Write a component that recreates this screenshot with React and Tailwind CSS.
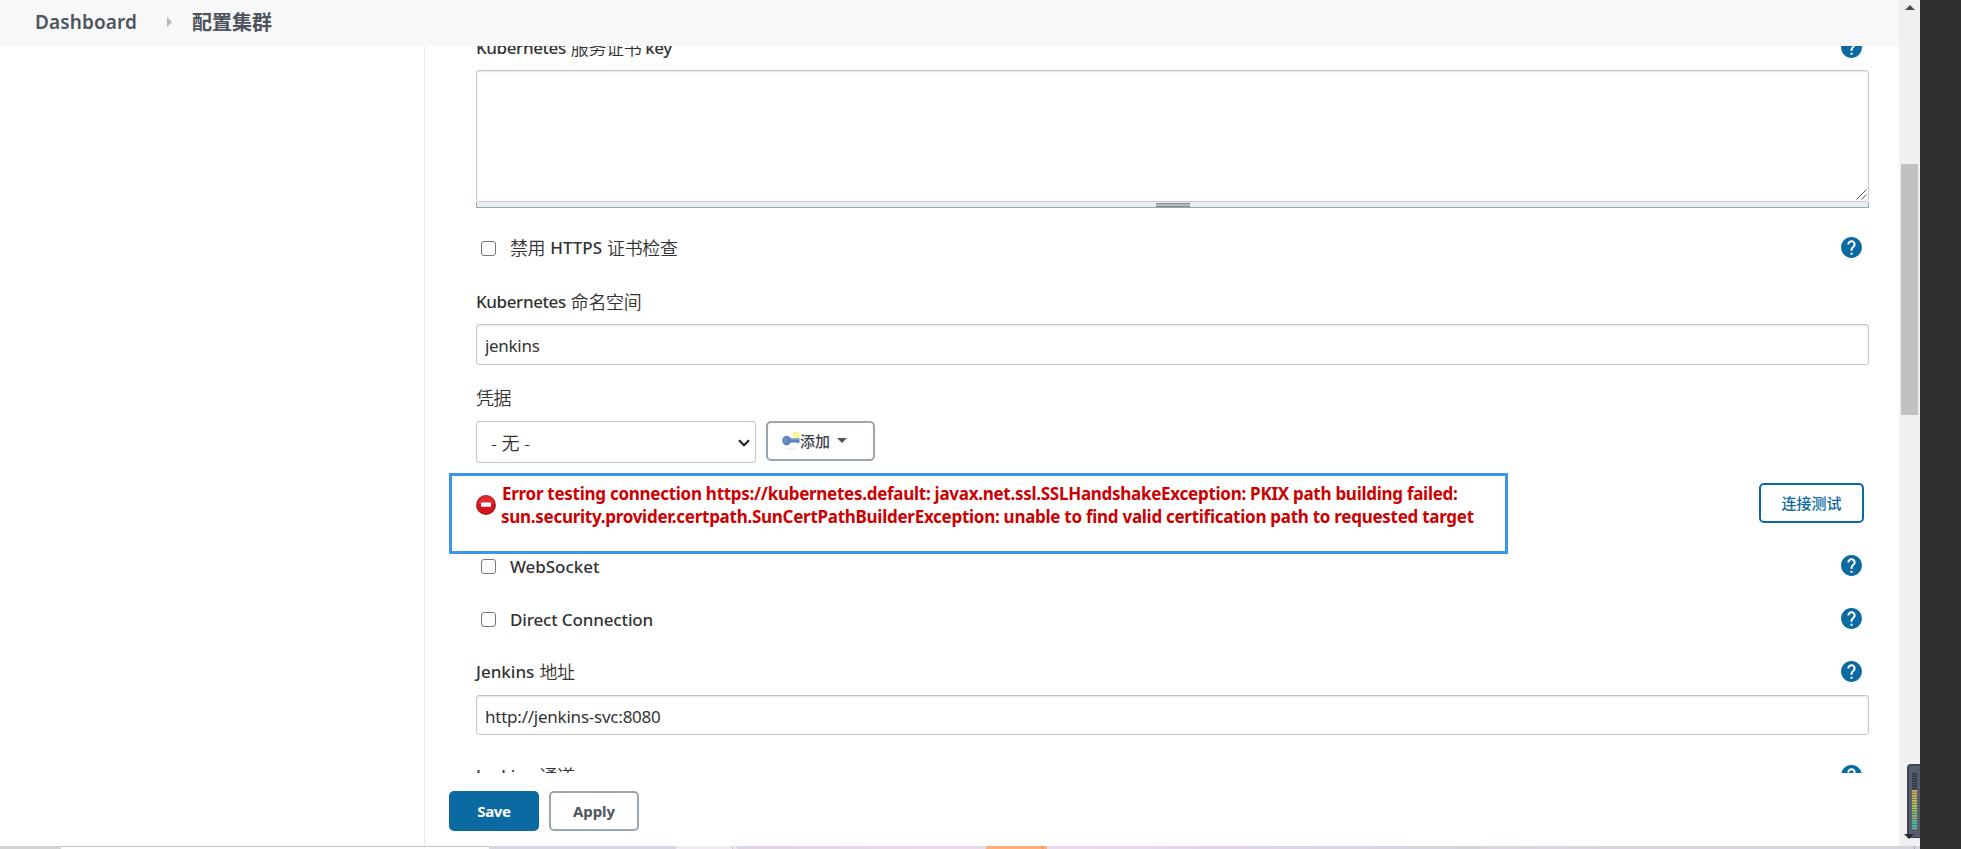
import React from "react";

const HelpIcon = () => (
  <svg viewBox="0 0 24 24" className="w-[25px] h-[25px] -m-[2px] shrink-0">
    <path fill="#0b6aa2" d="M12 2C6.48 2 2 6.48 2 12s4.48 10 10 10 10-4.48 10-10S17.52 2 12 2zm1 17h-2v-2h2v2zm2.07-7.75l-.9.92C13.45 12.9 13 13.5 13 15h-2v-.5c0-1.1.45-2.1 1.17-2.83l1.24-1.26c.37-.36.59-.86.59-1.41 0-1.1-.9-2-2-2s-2 .9-2 2H8c0-2.21 1.79-4 4-4s4 1.79 4 4c0 .88-.36 1.68-.93 2.25z" />
  </svg>
);

const KeyIcon = () => (
  <svg viewBox="0 0 18 20" className="w-[18px] h-5 shrink-0">
    <ellipse cx="9" cy="17.8" rx="6" ry="1.1" fill="#eeeeee" />
    <circle cx="14.2" cy="4.2" r="3.2" fill="#fdf47c" />
    <path d="M6 7.2h11.5v4.2l-1.5 1-1.5-1H6z" fill="#5b86bd" />
    <path d="M8 7.4h9v1.2H8z" fill="#8fb0d8" />
    <ellipse cx="4.6" cy="9.6" rx="4.4" ry="4.8" fill="#5683bc" />
    <ellipse cx="4" cy="9" rx="2.4" ry="2.8" fill="#6a91c6" />
    <circle cx="14.2" cy="4.2" r="1.2" fill="#fffcc8" />
  </svg>
);

const ErrorIcon = () => (
  <svg viewBox="0 0 20 20" className="w-5 h-5 shrink-0">
    <circle cx="10" cy="10" r="9.9" fill="#a81a1e" />
    <circle cx="10" cy="9.6" r="8.8" fill="#d8141b" />
    <path d="M2 9a8 8 0 0 1 16 0z" fill="#e0484c" opacity=".5" />
    <rect x="5" y="7.5" width="10" height="4.3" rx=".6" fill="#fff" />
  </svg>
);

const Checkbox = () => (
  <input type="checkbox" className="appearance-none w-[15px] h-[15px] ml-[5px] mr-[14px] bg-white border border-[#767676] rounded-[3px] shrink-0" />
);

const Row = ({ children, className, help = true }) => (
  <div className={`flex items-center h-6 pr-[7px] whitespace-nowrap text-[17px] font-medium ${className}`}>
    {children}
    {help && (
      <div className="ml-auto -mt-px">
        <HelpIcon />
      </div>
    )}
  </div>
);

const Cjk = ({ children }) => <span className="text-[18px] tracking-[-0.4px] font-[350]">{children}</span>;

const inputStyle = "block w-full border border-[#c6c6c6] rounded-[3px] pl-2 text-[17px] bg-white shadow-[inset_0_1px_2px_rgba(0,0,0,0.1)] outline-none";

const Meter = () => (
  <svg viewBox="0 0 13 74" className="absolute left-[8px] top-[764px] w-[13px] h-[74px]">
    <path d="M13 0H4Q0 0 0 4V70Q0 74 4 74H13z" fill="#3d424c" />
    <path d="M13 2H4Q2 2 2 4V70Q2 73 4 73H13z" fill="#555c6d" />
    <path d="M7.6 9V26" stroke="#30343b" strokeWidth="5" strokeDasharray="1.5 1" />
    <path d="M7.6 26V36" stroke="#d4b84e" strokeWidth="5" strokeDasharray="1.7 .8" />
    <path d="M7.6 36V46" stroke="#c0c950" strokeWidth="5" strokeDasharray="1.7 .8" />
    <path d="M7.6 46V56" stroke="#83c266" strokeWidth="5" strokeDasharray="1.7 .8" />
    <path d="M7.6 56V66" stroke="#4fc5a0" strokeWidth="5" strokeDasharray="1.7 .8" />
  </svg>
);

const App = () => {
  return (
    <div className="flex w-[1961px] h-[849px] overflow-hidden bg-[#303030] text-[#333] font-['Noto_Sans','Noto_Sans_CJK_SC',sans-serif]">
      <div className="flex flex-col w-[1920px]">
        <div className="flex h-[846px]">
          <div className="flex flex-col w-[1899px] bg-white">
            <header className="flex items-center h-[46px] shrink-0 pl-[35px] pb-px bg-[#f8f8f8] text-[#4d545d] font-semibold">
              <span className="text-[19px] tracking-[0.1px]">Dashboard</span>
              <svg viewBox="0 0 5 10" className="w-[5px] h-[10px] ml-[30px] mr-5 mb-[2px]">
                <path d="M0 0L5 5L0 10z" fill="#b5b8bb" />
              </svg>
              <span className="text-[20px] font-bold">配置集群</span>
            </header>

            <div className="flex h-[800px]">
              <aside className="w-[425px] border-r border-[#e9e9ec]"></aside>

              <main className="flex flex-col w-[1474px]">
                <div className="h-[727px] overflow-hidden pl-[51px] pr-[30px]">
                  <Row className="-mt-[10px]">
                    <span className="tracking-[-0.4px] mr-[5px]">Kubernetes</span>
                    <Cjk>服务证书</Cjk>
                    <span className="tracking-[-0.4px] ml-[4px]">key</span>
                  </Row>
                  <div className="relative mt-[10px]">
                    <textarea className={`${inputStyle} h-[132px] resize-none`} />
                    <svg viewBox="0 0 11 11" className="absolute right-[2px] bottom-[2px] w-[11px] h-[11px]" fill="none" stroke="#555" strokeWidth="1">
                      <path d="M0.5 10.5L10.5 0.5M5.5 10.5L10.5 5.5" />
                    </svg>
                  </div>
                  <div className="flex justify-center h-[6px] border border-t-0 border-[#98a6ae] bg-[#e9eef0]">
                    <div className="w-[34px] h-[4px] mt-px border-y border-[#858b8e] bg-[#b9bfc1]"></div>
                  </div>

                  <Row className="mt-7">
                    <Checkbox />
                    <Cjk>禁用</Cjk>
                    <span className="mx-[5px]">HTTPS</span>
                    <Cjk>证书检查</Cjk>
                  </Row>

                  <Row className="mt-[30px]" help={false}>
                    <span className="tracking-[-0.4px] mr-[5px]">Kubernetes</span>
                    <Cjk>命名空间</Cjk>
                  </Row>
                  <input defaultValue="jenkins" className={`${inputStyle} h-[41px] mt-[10px] pt-px tracking-[-0.3px]`} />

                  <Row className="mt-[21px]" help={false}>
                    <Cjk>凭据</Cjk>
                  </Row>
                  <div className="flex mt-[11px] gap-[10px]">
                    <div className="flex items-center justify-between w-[280px] h-[42px] pl-[14px] pr-[5px] pt-[2px] border border-[#c6c6c6] rounded-[3px] text-[18px] font-[350]">
                      <span>- 无 -</span>
                      <svg viewBox="0 0 12 8" className="w-3 h-2" fill="none" stroke="#222" strokeWidth="2.2">
                        <path d="M1 1.2L6 6.2L11 1.2" />
                      </svg>
                    </div>
                    <button className="flex items-center w-[109px] h-10 pl-[14px] border-2 border-[#98a6b0] rounded-[5px] text-[15px] font-medium text-[#3d444c] whitespace-nowrap">
                      <KeyIcon />
                      添加
                      <svg viewBox="0 0 10 5" className="w-[10px] h-[5px] ml-[7px] mb-[2px]">
                        <path d="M0 0H10L5 5z" fill="#4d545d" />
                      </svg>
                    </button>
                  </div>

                  <div className="flex mt-[10px] h-[81px] -ml-[27px] pr-[5px]">
                    <div className="flex w-[1059px] border-[3px] border-[#3b97e8] pl-6 pt-[6px]">
                      <div className="mt-[13px]">
                        <ErrorIcon />
                      </div>
                      <div className="ml-[5px] text-[17px] leading-[23px] font-bold text-[#c00] tracking-[-0.275px] whitespace-nowrap">
                        <p className="pl-px">Error testing connection https://kubernetes.default: javax.net.ssl.SSLHandshakeException: PKIX path building failed:</p>
                        <p>sun.security.provider.certpath.SunCertPathBuilderException: unable to find valid certification path to requested target</p>
                      </div>
                    </div>
                    <button className="w-[105px] h-10 mt-[10px] ml-auto border-2 border-[#0b6aa2] rounded-[5px] text-[15px] font-medium text-[#0b6aa2]">连接测试</button>
                  </div>

                  <Row>
                    <Checkbox />
                    <span className="pt-px tracking-[-0.05px]">WebSocket</span>
                  </Row>
                  <Row className="mt-[29px]">
                    <Checkbox />
                    <span className="pt-px tracking-[-0.15px]">Direct Connection</span>
                  </Row>

                  <Row className="mt-[29px]">
                    <span className="mr-[5px]">Jenkins</span>
                    <Cjk>地址</Cjk>
                  </Row>
                  <input defaultValue="http://jenkins-svc:8080" className={`${inputStyle} h-10 mt-[11px] pt-[2px] tracking-[-0.23px]`} />

                  <Row className="mt-[29px]">
                    <span className="mr-[5px]">Jenkins</span>
                    <Cjk>通道</Cjk>
                  </Row>
                </div>

                <div className="flex gap-[10px] pl-6 pt-[18px] text-[15px] font-bold">
                  <button className="w-[90px] h-10 rounded-[5px] bg-[#0b6aa2] text-white tracking-[-0.3px]">Save</button>
                  <button className="w-[90px] h-10 rounded-[5px] border-2 border-[#98a6b0] text-[#4d545d] tracking-[-0.1px]">Apply</button>
                </div>
              </main>
            </div>
          </div>

          {/* page scrollbar */}
          <div className="relative flex flex-col items-center w-[21px] bg-[#f0f0f0]">
            <svg viewBox="0 0 10 5" className="w-[10px] h-[5px] mt-[5px]">
              <path d="M0 5H10L5 0z" fill="#4a4a4a" />
            </svg>
            <div className="w-[17px] h-[251px] mt-[154px] bg-[#c1c1c1]"></div>
            <Meter />
            <svg viewBox="0 0 10 5" className="absolute left-[5px] top-[834px] w-[10px] h-[5px]">
              <path d="M0 0H10L5 5z" fill="#26292e" />
            </svg>
          </div>
        </div>

        {/* top edge of the windows behind */}
        <div className="flex h-[3px]">
          <div className="w-[61px] bg-[#d2d2d2]"></div>
          <div className="w-[428px] bg-white border-t border-[#c8c8c8]"></div>
          <div className="w-[187px] bg-[#d9d4e1]"></div>
          <div className="w-[56px] bg-[#f1ecf4]"></div>
          <div className="w-px bg-[#c9c2cc]"></div>
          <div className="w-[4px] bg-[#eee6f0]"></div>
          <div className="w-[249px] bg-linear-to-r from-[#dfd4e4] to-[#ecdaeb]"></div>
          <div className="w-[56px] bg-[#fdae7a]"></div>
          <div className="w-px bg-[#e2935f]"></div>
          <div className="w-[4px] bg-[#fdae7a]"></div>
          <div className="w-[433px] bg-linear-to-r from-[#ebdaec] via-[#dfd3e6] to-[#d3d3da]"></div>
          <div className="w-[434px] bg-linear-to-r from-[#dcd3df] to-[#d5d3dc]"></div>
          <div className="w-px bg-[#a9a8ae]"></div>
          <div className="w-[5px] bg-[#d8d6de]"></div>
        </div>
      </div>
    </div>
  );
};

export default App;
